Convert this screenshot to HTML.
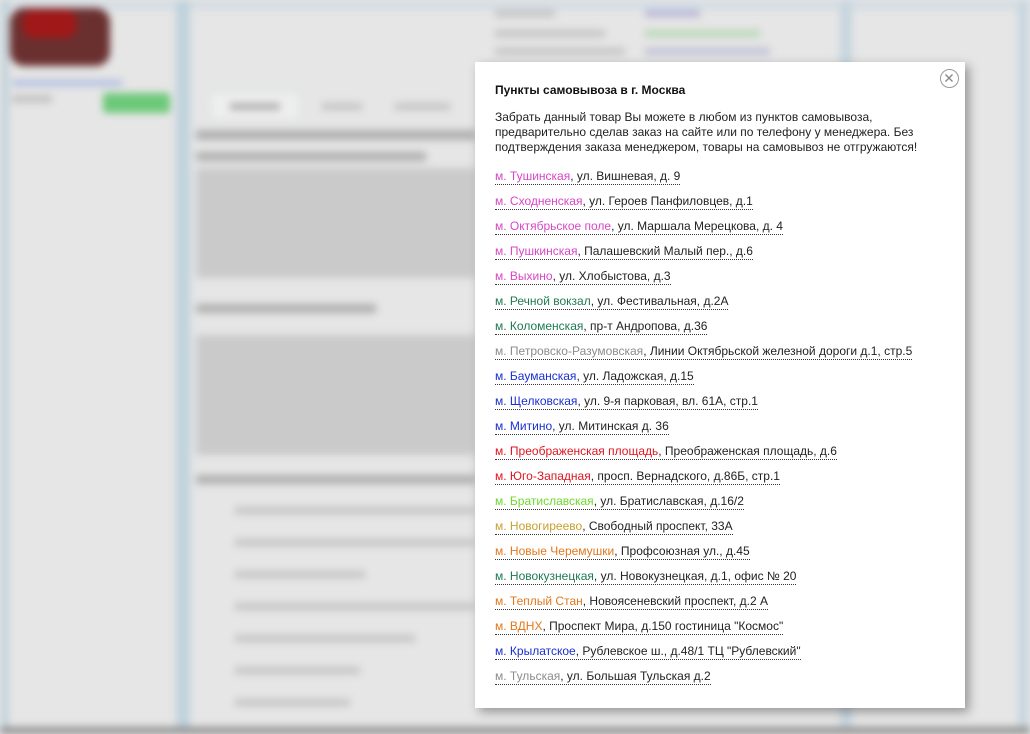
<!DOCTYPE html>
<html><head><meta charset="utf-8">
<style>
*{margin:0;padding:0;box-sizing:border-box}
body{width:1030px;height:734px;overflow:hidden;background:#e6e6e6;font-family:"Liberation Sans",Arial,sans-serif;position:relative}
#bg{position:absolute;left:0;top:0;width:1030px;height:734px;filter:blur(4px)}
#bg div{position:absolute}
.g{background:#c4c4c4}
.d{background:#b0b0b0}
#pop{position:absolute;left:475px;top:62px;width:490px;height:646px;background:#fff;box-shadow:4px 4px 10px rgba(0,0,0,.35);font-size:12px;color:#222}
h1{position:absolute;left:20px;top:21px;font-size:12px;font-weight:bold;color:#111}
.desc{position:absolute;left:20px;top:48px;width:450px;line-height:15px}
ul{list-style:none;position:absolute;left:20px;top:107px}
li{height:25px;line-height:15px}
li span.w{border-bottom:1px dotted #333;padding-bottom:1px}
.pk{color:#d946c7}.gr{color:#1e7a52}.gy{color:#8c8c8c}.bl{color:#1a2fd0}.rd{color:#e0141e}.lg{color:#6fd82a}.ol{color:#c8a030}.or{color:#e2781c}
.x{position:absolute;left:465px;top:7px;width:19px;height:19px;border:1.5px solid #999;border-radius:50%}
</style></head><body>
<div id="bg">
 <div style="left:0;top:0;width:1030px;height:10px;background:#d5dde3"></div>
 <div style="left:2px;top:0;width:6px;height:734px;background:#b8cdd8"></div>
 <div style="left:176px;top:0;width:14px;height:734px;background:#bfd2dc"></div>
 <div style="left:840px;top:0;width:12px;height:734px;background:#c6d5de"></div>
 <div style="left:1018px;top:0;width:10px;height:734px;background:#c6d5de"></div>
 <div style="left:10px;top:8px;width:100px;height:58px;background:#6a3030;border-radius:14px"></div>
 <div style="left:22px;top:10px;width:55px;height:28px;background:#a01818;border-radius:12px"></div>
 <div style="left:12px;top:80px;width:110px;height:6px;background:#b0bde0"></div>
 <div style="left:12px;top:95px;width:40px;height:8px" class="g"></div>
 <div style="left:103px;top:93px;width:67px;height:20px;background:#6cc878;border-radius:3px"></div>
 <div style="left:210px;top:92px;width:90px;height:28px;background:#eeeeee;border:1px solid #d4dbe0"></div>
 <div style="left:230px;top:103px;width:50px;height:7px" class="d"></div>
 <div style="left:322px;top:103px;width:40px;height:7px" class="g"></div>
 <div style="left:395px;top:103px;width:55px;height:7px" class="g"></div>
 <div style="left:196px;top:130px;width:280px;height:10px" class="d"></div>
 <div style="left:196px;top:152px;width:230px;height:9px" class="d"></div>
 <div style="left:196px;top:168px;width:280px;height:110px;background:#cacaca"></div>
 <div style="left:196px;top:304px;width:180px;height:9px" class="d"></div>
 <div style="left:196px;top:335px;width:280px;height:120px;background:#cacaca"></div>
 <div style="left:196px;top:475px;width:280px;height:9px" class="d"></div>
 <div style="left:235px;top:507px;width:240px;height:7px" class="g"></div>
 <div style="left:235px;top:539px;width:240px;height:7px" class="g"></div>
 <div style="left:235px;top:571px;width:130px;height:7px" class="g"></div>
 <div style="left:235px;top:603px;width:240px;height:7px" class="g"></div>
 <div style="left:235px;top:635px;width:180px;height:7px" class="g"></div>
 <div style="left:235px;top:667px;width:125px;height:7px" class="g"></div>
 <div style="left:235px;top:699px;width:115px;height:7px" class="g"></div>
 <div style="left:495px;top:10px;width:60px;height:7px" class="g"></div>
 <div style="left:495px;top:30px;width:110px;height:7px" class="g"></div>
 <div style="left:495px;top:48px;width:130px;height:7px" class="g"></div>
 <div style="left:645px;top:10px;width:55px;height:7px;background:#b8b8d8"></div>
 <div style="left:645px;top:30px;width:115px;height:7px;background:#b8d8b8"></div>
 <div style="left:645px;top:48px;width:125px;height:7px;background:#c0c0d8"></div>
 <div style="left:0;top:727px;width:1030px;height:7px;background:#8e8e8e"></div>
</div>
<div id="pop">
 <div class="x"><svg width="16" height="16" viewBox="0 0 16 16" style="position:absolute;left:0;top:0"><path d="M4.5 4.5L11.5 11.5M11.5 4.5L4.5 11.5" stroke="#888" stroke-width="1.4"/></svg></div>
 <h1>Пункты самовывоза в г. Москва</h1>
 <div class="desc">Забрать данный товар Вы можете в любом из пунктов самовывоза, предварительно сделав заказ на сайте или по телефону у менеджера. Без подтверждения заказа менеджером, товары на самовывоз не отгружаются!</div>
 <ul>
  <li><span class="w"><span class="pk">м. Тушинская</span>, ул. Вишневая, д. 9</span></li>
  <li><span class="w"><span class="pk">м. Сходненская</span>, ул. Героев Панфиловцев, д.1</span></li>
  <li><span class="w"><span class="pk">м. Октябрьское поле</span>, ул. Маршала Мерецкова, д. 4</span></li>
  <li><span class="w"><span class="pk">м. Пушкинская</span>, Палашевский Малый пер., д.6</span></li>
  <li><span class="w"><span class="pk">м. Выхино</span>, ул. Хлобыстова, д.3</span></li>
  <li><span class="w"><span class="gr">м. Речной вокзал</span>, ул. Фестивальная, д.2А</span></li>
  <li><span class="w"><span class="gr">м. Коломенская</span>, пр-т Андропова, д.36</span></li>
  <li><span class="w"><span class="gy">м. Петровско-Разумовская</span>, Линии Октябрьской железной дороги д.1, стр.5</span></li>
  <li><span class="w"><span class="bl">м. Бауманская</span>, ул. Ладожская, д.15</span></li>
  <li><span class="w"><span class="bl">м. Щелковская</span>, ул. 9-я парковая, вл. 61А, стр.1</span></li>
  <li><span class="w"><span class="bl">м. Митино</span>, ул. Митинская д. 36</span></li>
  <li><span class="w"><span class="rd">м. Преображенская площадь</span>, Преображенская площадь, д.6</span></li>
  <li><span class="w"><span class="rd">м. Юго-Западная</span>, просп. Вернадского, д.86Б, стр.1</span></li>
  <li><span class="w"><span class="lg">м. Братиславская</span>, ул. Братиславская, д.16/2</span></li>
  <li><span class="w"><span class="ol">м. Новогиреево</span>, Свободный проспект, 33А</span></li>
  <li><span class="w"><span class="or">м. Новые Черемушки</span>, Профсоюзная ул., д.45</span></li>
  <li><span class="w"><span class="gr">м. Новокузнецкая</span>, ул. Новокузнецкая, д.1, офис № 20</span></li>
  <li><span class="w"><span class="or">м. Теплый Стан</span>, Новоясеневский проспект, д.2 А</span></li>
  <li><span class="w"><span class="or">м. ВДНХ</span>, Проспект Мира, д.150 гостиница "Космос"</span></li>
  <li><span class="w"><span class="bl">м. Крылатское</span>, Рублевское ш., д.48/1 ТЦ "Рублевский"</span></li>
  <li><span class="w"><span class="gy">м. Тульская</span>, ул. Большая Тульская д.2</span></li>
 </ul>
</div>
</body></html>
